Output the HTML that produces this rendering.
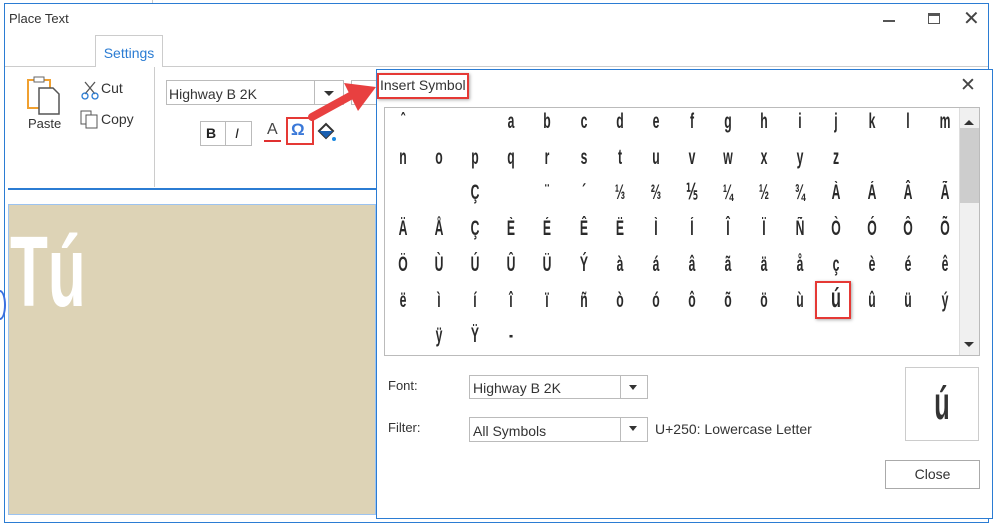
<!DOCTYPE html>
<html><head><meta charset="utf-8"><style>
*{margin:0;padding:0;box-sizing:border-box}
body{width:993px;height:515px;overflow:hidden;background:#fff;font-family:"Liberation Sans",sans-serif;position:relative;color:#333}
.a{position:absolute}
.sym{position:absolute;width:36px;text-align:center;font-family:"Liberation Sans Narrow","Liberation Sans",sans-serif;font-size:21px;font-weight:bold;color:#2a2a2a;transform:scaleX(.58);line-height:22px}
.t{font-size:13px;color:#333}
</style></head><body>
<div class="a" style="left:152px;top:0;width:1px;height:4px;background:#ccc"></div>
<div class="a" style="left:4px;top:3px;width:985px;height:520px;border:1px solid #2b7cd3"></div>
<div class="a t" style="left:9px;top:11px;font-size:13px">Place Text</div>
<div class="a" style="left:883px;top:20px;width:12px;height:2px;background:#555"></div>
<div class="a" style="left:928px;top:13px;width:12px;height:11px;border:1.5px solid #555;border-top-width:3px"></div>
<div class="a" style="left:963px;top:6px;font-size:20px;color:#444">✕</div>
<div class="a" style="left:5px;top:66px;width:983px;height:1px;background:#ccc"></div>
<div class="a" style="left:95px;top:35px;width:68px;height:32px;border:1px solid #ccc;border-bottom:none;background:#fff;color:#2b7cd3;font-size:14px;text-align:center;line-height:34px">Settings</div>
<div class="a" style="left:154px;top:67px;width:1px;height:120px;background:#ccc"></div>
<div class="a" style="left:8px;top:188px;width:368px;height:2px;background:#2b7cd3"></div>
<svg class="a" style="left:24px;top:74px" width="42" height="42"><rect x="4" y="6" width="22" height="28" fill="#fff" stroke="#f0a030" stroke-width="2"/><rect x="10" y="3" width="10" height="5" fill="#fff" stroke="#666"/><path d="M15 14h14l6 6v20H15z" fill="#fff" stroke="#555" stroke-width="1.5"/></svg>
<div class="a t" style="left:28px;top:116px">Paste</div>
<svg class="a" style="left:81px;top:80px" width="18" height="20"><path d="M4 2l10 12M14 2L4 14" stroke="#555" stroke-width="1.3" fill="none"/><circle cx="4" cy="16" r="3" fill="none" stroke="#2b7cd3" stroke-width="1.3"/><circle cx="14" cy="16" r="3" fill="none" stroke="#2b7cd3" stroke-width="1.3"/></svg>
<div class="a" style="left:101px;top:80px;font-size:14px">Cut</div>
<svg class="a" style="left:80px;top:109px" width="20" height="20"><rect x="1" y="2" width="10" height="13" fill="#fff" stroke="#555"/><rect x="6" y="6" width="11" height="13" fill="#fff" stroke="#555"/></svg>
<div class="a" style="left:101px;top:111px;font-size:14px">Copy</div>
<div class="a" style="left:166px;top:80px;width:178px;height:25px;border:1px solid #bbb"></div>
<div class="a" style="left:314px;top:80px;width:1px;height:25px;background:#bbb"></div>
<div class="a t" style="left:169px;top:86px;font-size:14px">Highway B 2K</div>
<div class="a" style="left:324px;top:91px;border:5px solid transparent;border-top:5px solid #333"></div>
<div class="a" style="left:351px;top:80px;width:30px;height:25px;border:1px solid #bbb"></div>
<div class="a" style="left:200px;top:121px;width:52px;height:25px;border:1px solid #bbb"></div>
<div class="a" style="left:225px;top:121px;width:1px;height:25px;background:#bbb"></div>
<div class="a" style="left:206px;top:125px;font-weight:bold;font-size:14px;color:#222">B</div>
<div class="a" style="left:235px;top:125px;font-style:italic;font-size:14px;color:#222">I</div>
<div class="a" style="left:267px;top:121px;font-size:16px;color:#444">A</div>
<div class="a" style="left:264px;top:140px;width:17px;height:2px;background:#e03030"></div>
<div class="a" style="left:286px;top:117px;width:28px;height:28px;border:2px solid #e53935"></div>
<div class="a" style="left:291px;top:120px;font-size:17px;color:#3a78d8;font-weight:bold">Ω</div>
<svg class="a" style="left:316px;top:122px" width="22" height="22"><path d="M3 9l7-7 7 7-7 7z" fill="#fff" stroke="#333" stroke-width="2"/><path d="M3 9h14l-7 7z" fill="#1a5fb0"/><circle cx="18" cy="17" r="2" fill="#1a88e0"/></svg>
<svg class="a" style="left:300px;top:75px" width="80" height="60"><path d="M12 42 L52 20" stroke="#e84040" stroke-width="8" stroke-linecap="round"/><path d="M44 8 L76 12 L58 36z" fill="#e84040"/></svg>
<div class="a" style="left:8px;top:204px;width:368px;height:311px;background:#ddd3b6;border:1px solid #9cc3f0"></div>
<div class="a" style="left:10px;top:212px;font-size:100px;font-weight:bold;color:#fff;transform:scaleX(.62);transform-origin:left;font-family:'Liberation Sans Narrow','Liberation Sans',sans-serif;line-height:120px">Tú</div>
<div class="a" style="left:-6px;top:290px;width:12px;height:30px;border:2px solid #3a6fe0;border-radius:50%"></div>
<div class="a" style="left:376px;top:69px;width:617px;height:450px;background:#fff;border:1px solid #2b7cd3"></div>
<div class="a" style="left:377px;top:73px;width:92px;height:26px;border:2px solid #e53935;box-shadow:1px 1px 3px #aaa"></div>
<div class="a" style="left:380px;top:77px;font-size:14px;color:#333">Insert Symbol</div>
<div class="a" style="left:960px;top:74px;font-size:19px;color:#444">✕</div>
<div class="a" style="left:384px;top:107px;width:596px;height:249px;border:1px solid #bbb"></div>
<div class="a" style="left:959px;top:108px;width:20px;height:247px;background:#f0f0f0;border-left:1px solid #ddd"></div>
<div class="a" style="left:960px;top:128px;width:19px;height:75px;background:#cdcdcd"></div>
<div class="a" style="left:964px;top:115px;border:5px solid transparent;border-bottom:5px solid #333"></div>
<div class="a" style="left:964px;top:342px;border:5px solid transparent;border-top:5px solid #333"></div>
<div class="a" style="left:815px;top:281px;width:36px;height:38px;border:2px solid #e53935;box-shadow:1px 1px 3px #aaa"></div>
<div id="g"></div>
<div class="a t" style="left:388px;top:378px">Font:</div>
<div class="a" style="left:469px;top:375px;width:179px;height:24px;border:1px solid #bbb"></div>
<div class="a" style="left:620px;top:375px;width:1px;height:24px;background:#bbb"></div>
<div class="a" style="left:629px;top:385px;border:4px solid transparent;border-top:5px solid #333"></div>
<div class="a" style="left:473px;top:380px;font-size:14px">Highway B 2K</div>
<div class="a t" style="left:388px;top:420px">Filter:</div>
<div class="a" style="left:469px;top:417px;width:179px;height:25px;border:1px solid #bbb"></div>
<div class="a" style="left:620px;top:417px;width:1px;height:25px;background:#bbb"></div>
<div class="a" style="left:629px;top:426px;border:4px solid transparent;border-top:5px solid #333"></div>
<div class="a" style="left:473px;top:423px;font-size:14px">All Symbols</div>
<div class="a" style="left:655px;top:421px;font-size:14px">U+250: Lowercase Letter</div>
<div class="a" style="left:905px;top:367px;width:74px;height:74px;border:1px solid #ccc"></div>
<div class="a" style="left:905px;top:376px;width:74px;text-align:center;font-size:46px;font-weight:bold;color:#333;transform:scaleX(.55);font-family:'Liberation Sans Narrow','Liberation Sans',sans-serif">ú</div>
<div class="a" style="left:885px;top:460px;width:95px;height:29px;border:1px solid #aaa;text-align:center;line-height:27px;font-size:14px">Close</div>
<script>
var rows=[["ˆ","","","a","b","c","d","e","f","g","h","i","j","k","l","m"],
["n","o","p","q","r","s","t","u","v","w","x","y","z"],
["","","Ç","","¨","´","⅓","⅔","⅕","¼","½","¾","À","Á","Â","Ã"],
["Ä","Å","Ç","È","É","Ê","Ë","Ì","Í","Î","Ï","Ñ","Ò","Ó","Ô","Õ"],
["Ö","Ù","Ú","Û","Ü","Ý","à","á","â","ã","ä","å","ç","è","é","ê"],
["ë","ì","í","î","ï","ñ","ò","ó","ô","õ","ö","ù","ú","û","ü","ý"],
["","ÿ","Ÿ","-"]];
var h="";rows.forEach(function(r,i){r.forEach(function(c,j){if(c)h+='<div class="sym" style="left:'+(385+j*36.1)+'px;top:'+(111+i*35.7)+'px'+(i==5&&j==12?';font-size:28px;top:'+(108+i*35.7)+'px':'')+'">'+c+'</div>';});});
document.getElementById("g").innerHTML=h;
</script>
</body></html>
